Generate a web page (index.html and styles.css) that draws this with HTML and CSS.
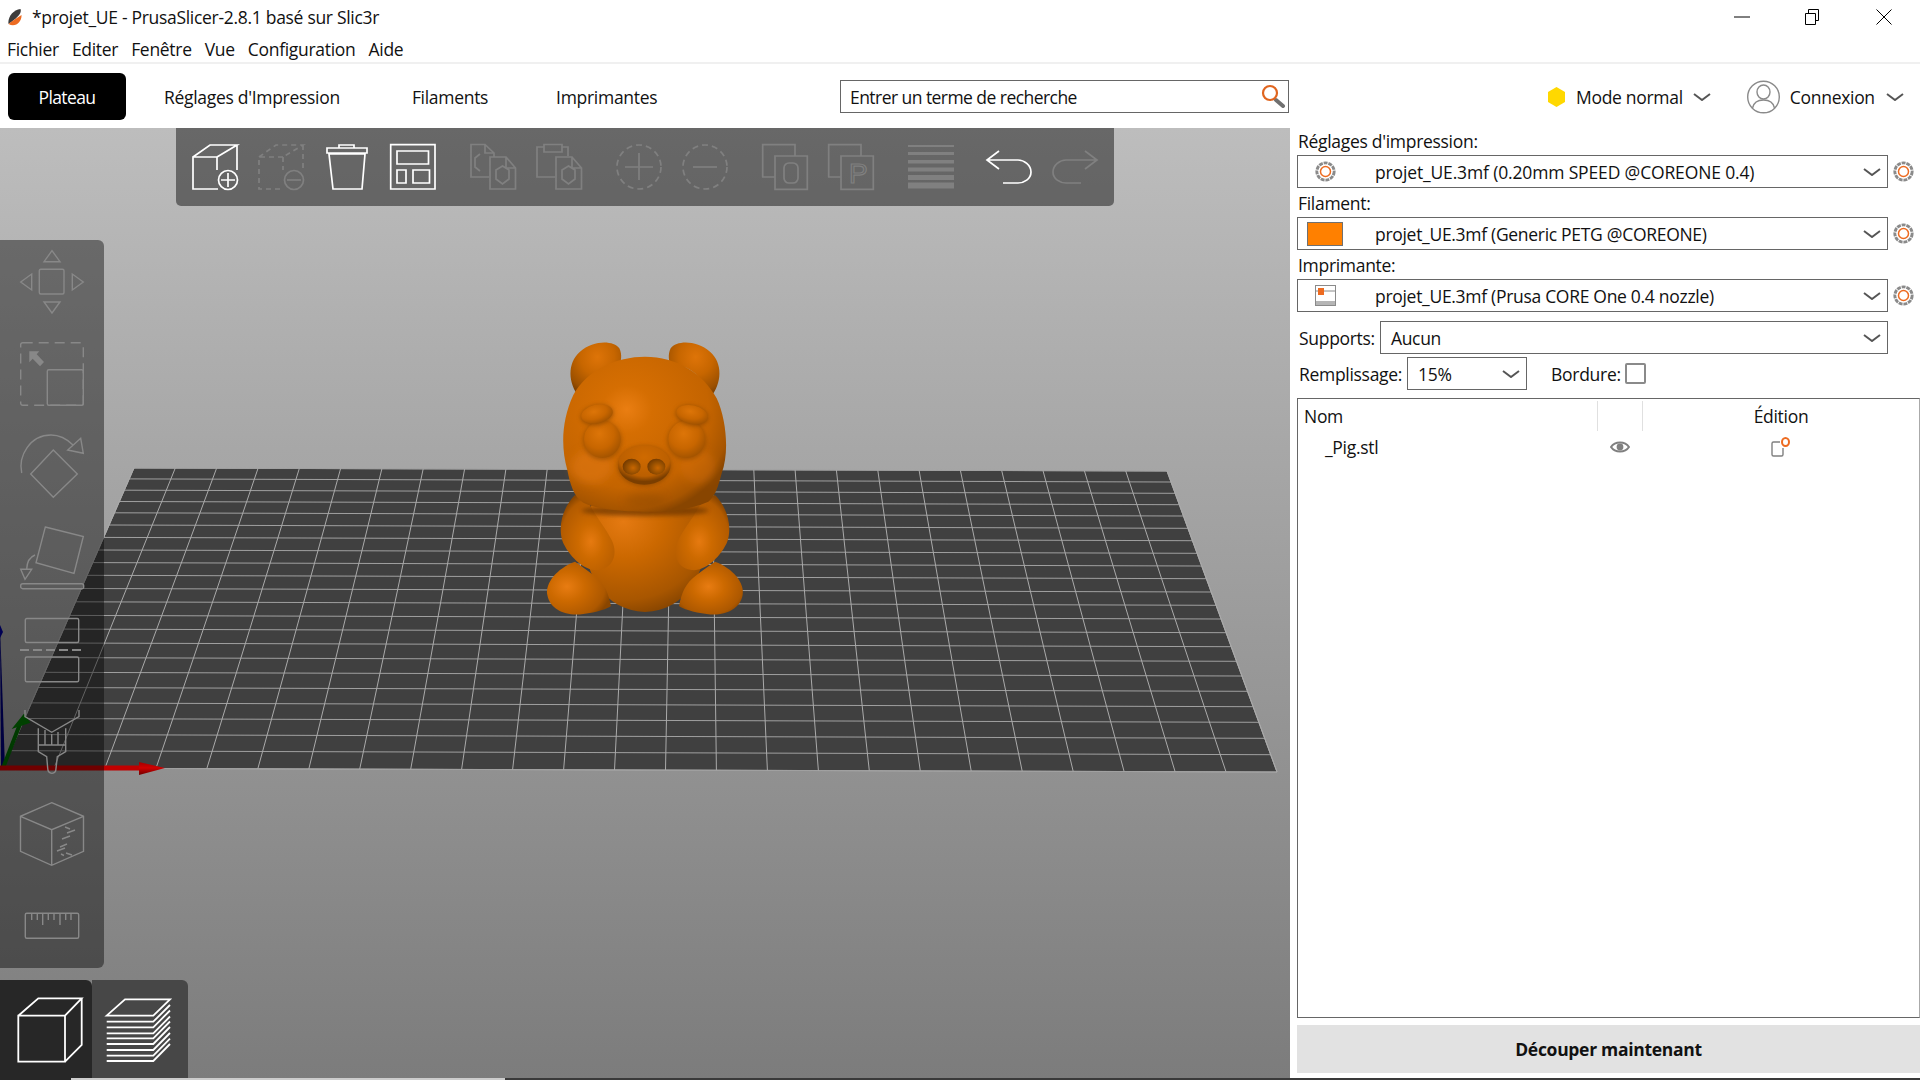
FILE: index.html
```html
<!DOCTYPE html>
<html lang="fr">
<head>
<meta charset="utf-8">
<title>PrusaSlicer</title>
<link rel="stylesheet" href="styles.css">
</head>
<body>
<svg class="defs" width="0" height="0" aria-hidden="true">
  <defs>
    <symbol id="gear" viewBox="0 0 21 21">
      <circle cx="10.5" cy="10.5" r="8.6" fill="none" stroke="#8a8a8a" stroke-width="3" stroke-dasharray="3.9 .9"/>
      <circle cx="10.5" cy="10.5" r="6.9" fill="#fff"/>
      <circle cx="10.5" cy="10.5" r="5" fill="#fff" stroke="#ed6b21" stroke-width="1.5"/>
    </symbol>
    <symbol id="chev" viewBox="0 0 18 8">
      <path d="M1 1 L9 7 L17 1" fill="none" stroke="#555" stroke-width="2"/>
    </symbol>
  </defs>
</svg>

<header class="titlebar">
  <div class="title-left">
    <svg class="logo" viewBox="0 0 14 17">
      <path d="M.5 15 C-.5 8 5 1 12.500 0 C14 4 10 8 .5 15 Z" fill="#3c3c3c"/>
      <path d="M.5 15 C4 12 9 9 13.500 6 C14 12 8 19 .5 15 Z" fill="#ed6b21"/>
    </svg>
    <span>*projet_UE - PrusaSlicer-2.8.1 basé sur Slic3r</span>
  </div>
  <div class="winctl">
    <svg class="win-min" width="16" height="2" viewBox="0 0 16 2"><path d="M0 1H16" stroke="#000" stroke-width="1"/></svg>
    <svg class="win-max" width="16" height="16" viewBox="0 0 16 16"><path d="M1.5 4.5H11.5V15.5H1.5Z M4.5 4.5V.5H14.5V11.5H11.5" fill="none" stroke="#000" stroke-width="1"/></svg>
    <svg class="win-close" width="16" height="16" viewBox="0 0 16 16"><path d="M.5 .5L15.5 15.5M15.5 .5L.5 15.5" stroke="#000" stroke-width="1"/></svg>
  </div>
</header>

<nav class="menubar">
  <span>Fichier</span><span>Editer</span><span>Fenêtre</span><span>Vue</span><span>Configuration</span><span>Aide</span>
</nav>

<div class="tabbar">
  <div class="tabs">
    <div class="tab active">Plateau</div>
    <div class="tab tab-print">Réglages d'Impression</div>
    <div class="tab">Filaments</div>
    <div class="tab">Imprimantes</div>
  </div>
  <div class="search">
    <span class="search-text">Entrer un terme de recherche</span>
    <svg class="search-icon" width="26" height="24" viewBox="0 0 26 24">
      <path d="M15 16 L22 22" stroke="#707070" stroke-width="4" stroke-linecap="round"/>
      <circle cx="9" cy="9" r="7" fill="none" stroke="#e0651f" stroke-width="2.2"/>
    </svg>
  </div>
  <div class="mode">
    <svg width="17" height="20" viewBox="0 0 17 20"><path d="M8.5 0L17 5V15L8.5 20L0 15V5Z" fill="#ffd800"/></svg>
    <span>Mode normal</span>
    <svg class="chev" width="18" height="8"><use href="#chev"/></svg>
  </div>
  <div class="account">
    <svg width="33" height="34" viewBox="0 0 33 34">
      <g fill="none" stroke="#8a8a8a" stroke-width="1.4">
        <circle cx="16.5" cy="17" r="15.8"/>
        <ellipse cx="16.5" cy="12" rx="6.5" ry="7"/>
        <path d="M5.5 28 C7 21 12 20 16.5 20 C21 20 26 21 27.5 28"/>
      </g>
    </svg>
    <span>Connexion</span>
    <svg class="chev" width="18" height="8"><use href="#chev"/></svg>
  </div>
</div>

<main class="main">
  <section class="viewport">
    <svg class="scene" width="1290" height="950" viewBox="0 128 1290 950">
      <defs>
        <radialGradient id="pg" cx=".39" cy=".34" r=".7">
          <stop offset="0" stop-color="#ea7e12"/>
          <stop offset=".22" stop-color="#d56e02"/>
          <stop offset=".72" stop-color="#c46400"/>
          <stop offset=".92" stop-color="#a75500"/>
          <stop offset="1" stop-color="#884500"/>
        </radialGradient>
        <radialGradient id="pb" cx=".32" cy=".18" r=".95">
          <stop offset="0" stop-color="#e57a12"/>
          <stop offset=".35" stop-color="#cb6800"/>
          <stop offset=".75" stop-color="#a85600"/>
          <stop offset="1" stop-color="#743b00"/>
        </radialGradient>
        <radialGradient id="pfl" cx=".31" cy=".47" r=".7">
          <stop offset="0" stop-color="#e87c12"/>
          <stop offset=".4" stop-color="#cc6900"/>
          <stop offset=".85" stop-color="#ad5800"/>
          <stop offset="1" stop-color="#8a4600"/>
        </radialGradient>
        <radialGradient id="pfr" cx=".46" cy=".47" r=".62">
          <stop offset="0" stop-color="#e87c12"/>
          <stop offset=".4" stop-color="#cc6900"/>
          <stop offset=".85" stop-color="#ad5800"/>
          <stop offset="1" stop-color="#8a4600"/>
        </radialGradient>
        <radialGradient id="pal" cx=".56" cy=".62" r=".66">
          <stop offset="0" stop-color="#e67a10"/>
          <stop offset=".35" stop-color="#cd6a00"/>
          <stop offset=".85" stop-color="#b35b00"/>
          <stop offset="1" stop-color="#8a4600"/>
        </radialGradient>
        <radialGradient id="par" cx=".44" cy=".62" r=".66">
          <stop offset="0" stop-color="#e67a10"/>
          <stop offset=".35" stop-color="#cd6a00"/>
          <stop offset=".85" stop-color="#b35b00"/>
          <stop offset="1" stop-color="#8a4600"/>
        </radialGradient>
        <radialGradient id="pear" cx=".53" cy=".27" r=".75">
          <stop offset="0" stop-color="#de7408"/>
          <stop offset=".45" stop-color="#c76600"/>
          <stop offset=".85" stop-color="#9c5000"/>
          <stop offset="1" stop-color="#7c3f00"/>
        </radialGradient>
        <radialGradient id="pe" cx=".42" cy=".35" r=".66">
          <stop offset="0" stop-color="#dd7508"/>
          <stop offset=".6" stop-color="#c86600"/>
          <stop offset="1" stop-color="#a45400"/>
        </radialGradient>
        <radialGradient id="pn" cx=".5" cy=".3" r=".62">
          <stop offset="0" stop-color="#cf6a00"/>
          <stop offset=".78" stop-color="#bb5f00"/>
          <stop offset="1" stop-color="#7a3e00"/>
        </radialGradient>
        <radialGradient id="pd" cx=".58" cy=".58" r=".6">
          <stop offset="0" stop-color="#c86600"/>
          <stop offset=".55" stop-color="#985000"/>
          <stop offset="1" stop-color="#733a00"/>
        </radialGradient>
        <linearGradient id="redg" x1="0" x2="0" y1="0" y2="1">
          <stop offset="0" stop-color="#a00000"/>
          <stop offset=".45" stop-color="#d00000"/>
          <stop offset="1" stop-color="#700000"/>
        </linearGradient>
        <filter id="blur6" x="-30%" y="-60%" width="160%" height="220%"><feGaussianBlur stdDeviation="6"/></filter>
        <filter id="blur12" x="-40%" y="-40%" width="180%" height="180%"><feGaussianBlur stdDeviation="12"/></filter>
      </defs>

      <path class="plate" d="M134 468L1167 471L1277 772L3 768Z"/>
      <path class="grid-h" d="M134 468L1167 471M129.2 478.9L1171 482M124.3 490.2L1175.1 493.3M119.4 501.5L1179.3 504.7M114.4 512.8L1183.4 516M109.1 525L1187.9 528.3M103.7 537.4L1192.5 540.7M98.2 550L1197.1 553.3M92.7 562.6L1201.7 566M87.1 575.3L1206.4 578.7M81.4 588.5L1211.2 592M75.6 601.8L1216.1 605.3M69.6 615.4L1221.1 619M63.6 629.1L1226.1 632.7M57.6 643L1231.2 646.7M51.2 657.6L1236.6 661.3M44.8 672.3L1242 676M38.2 687.5L1247.5 691.3M31.4 702.9L1253.1 706.7M24.6 718.5L1258.8 722.3M17.6 734.5L1264.7 738.3M10.5 750.7L1270.7 754.7M3 768L1277 772"/>
      <path class="grid-v" d="M134 468L3 768M175.3 468L54 768M216.6 468.2L104.9 768.3M258 468.4L155.9 768.5M299.3 468.5L206.8 768.6M340.6 468.6L257.8 768.8M381.9 468.7L308.8 769M423.2 468.8L359.7 769.1M464.6 469L410.7 769.3M505.9 469.1L461.6 769.4M547.2 469.2L512.6 769.6M588.5 469.3L563.6 769.8M629.8 469.4L614.5 770M671.2 469.6L665.5 770.1M712.5 469.7L716.4 770.2M753.8 469.8L767.4 770.4M795.1 469.9L818.4 770.6M836.4 470L869.3 770.7M877.8 470.2L920.3 770.9M919.1 470.3L971.2 771M960.4 470.4L1022.2 771.2M1001.7 470.5L1073.2 771.4M1043 470.6L1124.1 771.5M1084.4 470.8L1175.1 771.7M1125.7 470.9L1226 771.8M1167 471L1277 772"/>

      <path d="M1 768L0 632V625L5 768Z" fill="#00006e"/>
      <path d="M0 638L3 632L0 625Z" fill="#000090"/>
      <path d="M3 768L20 724" stroke="#006400" stroke-width="4" fill="none"/>
      <path d="M16 726 L24 716 L28 722 Z" fill="#007000" stroke="#007000" stroke-width="3"/>
      <path d="M0 765.5H140V770.500H0Z" fill="#c00000"/>
      <path d="M139 762L165 768L139 775Z" fill="url(#redg)"/>

      <g transform="translate(530 320) scale(.33333)">
        <path d="M147 230C115 190 110 130 150 95C190 60 250 60 268 85C278 105 272 125 270 133C230 135 190 150 170 195Z" fill="url(#pear)"/>
        <path d="M543 230C575 190 580 130 540 95C500 60 440 60 422 85C412 105 418 125 420 133C460 135 500 150 520 195Z" fill="url(#pear)"/>
        <path d="M190 545C130 650 170 870 345 876C520 870 560 650 505 545Z" fill="url(#pb)"/>
        <path d="M135 725C80 745 45 790 52 825C60 870 110 890 160 882C200 878 235 865 243 858C235 820 225 790 190 765C170 750 150 735 135 725Z" fill="url(#pfl)"/>
        <path d="M555 725C610 745 645 790 638 825C630 870 580 890 530 882C490 878 455 865 447 858C455 820 465 790 500 765C520 750 540 735 555 725Z" fill="url(#pfr)"/>
        <path d="M135 525C100 560 80 620 100 670C125 720 170 755 205 750C250 745 265 700 245 660C225 620 190 580 175 545Z" fill="url(#pal)"/>
        <path d="M555 525C590 560 610 620 590 670C565 720 520 755 485 750C440 745 425 700 445 660C465 620 500 580 515 545Z" fill="url(#par)"/>
        <ellipse cx="345" cy="572" rx="190" ry="16" fill="#6b3600" opacity=".7" filter="url(#blur6)"/>
        <path d="M345 110C440 110 520 160 560 235C590 300 598 400 575 460C565 500 555 530 535 545C480 570 400 578 340 575C280 575 200 568 160 548C130 530 120 490 112 450C92 380 95 300 130 225C170 150 260 110 345 110Z" fill="url(#pg)"/>
        <ellipse cx="185" cy="440" rx="62" ry="50" fill="#e47a12" opacity=".5" filter="url(#blur12)"/>
        <ellipse cx="505" cy="440" rx="52" ry="50" fill="#e07510" opacity=".35" filter="url(#blur12)"/>
        <ellipse cx="345" cy="540" rx="60" ry="22" fill="#8a4600" opacity=".35" filter="url(#blur12)"/>
        <ellipse cx="217" cy="362" rx="58" ry="58" fill="#8a4600" opacity=".6" filter="url(#blur6)"/>
        <ellipse cx="470" cy="362" rx="58" ry="58" fill="#8a4600" opacity=".6" filter="url(#blur6)"/>
        <ellipse cx="217" cy="358" rx="55" ry="56" fill="url(#pe)"/>
        <ellipse cx="470" cy="358" rx="55" ry="56" fill="url(#pe)"/>
        <ellipse cx="201" cy="285" rx="49" ry="29" transform="rotate(-12 201 285)" fill="#7d4000" opacity=".65" filter="url(#blur6)"/>
        <ellipse cx="486" cy="287" rx="49" ry="29" transform="rotate(12 486 287)" fill="#7d4000" opacity=".65" filter="url(#blur6)"/>
        <ellipse cx="201" cy="282" rx="48" ry="28" transform="rotate(-12 201 282)" fill="url(#pe)"/>
        <ellipse cx="486" cy="284" rx="48" ry="28" transform="rotate(12 486 284)" fill="url(#pe)"/>
        <ellipse cx="343" cy="438" rx="80" ry="60" fill="#7d4000" opacity=".6" filter="url(#blur6)"/>
        <ellipse cx="343" cy="435" rx="79" ry="59" fill="url(#pn)"/>
        <ellipse cx="305" cy="440" rx="27" ry="24" fill="url(#pd)"/>
        <ellipse cx="379" cy="440" rx="27" ry="24" fill="url(#pd)"/>
      </g>
    </svg>

    <div class="toolbar">
      <div class="tb-group">
        <svg class="ti on" viewBox="0 0 46 46"><path d="M25 13H1V45H26M1 13L18 1H45L25 13M25 13V26M45 1V26"/><circle cx="36" cy="36" r="9.5"/><path d="M36 29V43M29 36H43"/></svg>
        <svg class="ti off dash" viewBox="0 0 46 46"><path d="M25 13H1V45H26M1 13L18 1H45L25 13M25 13V26M45 1V26"/><circle class="solid" cx="36" cy="36" r="9.5"/><path class="solid" d="M29 36H43"/></svg>
        <svg class="ti on" viewBox="0 0 46 46"><path d="M15 4V1H30V4M3 4H43V9H3ZM5 10H41L38 45H9Z"/></svg>
        <svg class="ti on" viewBox="0 0 46 46"><path d="M.7 .7H45V45H.7ZM7 7H38.5V20H7ZM7 26H16V39H7ZM23 26H39.5V39H23Z"/></svg>
      </div>
      <div class="tb-group">
        <svg class="ti off" viewBox="0 0 46 46"><path d="M19 33H1V.5H15L24 9V13M15 .5V9H24M10 10L5 14V23L10 27"/><path d="M20 13H36L45.5 24V45H20ZM36 13V24H45.5M32.5 22L39 26V35L32.5 40L26 35V26Z"/></svg>
        <svg class="ti off" viewBox="0 0 46 46"><path d="M19 33H1V3H8M26 3H32V12M8 .5H26V8H8Z"/><path d="M20 13H36L45.5 24V45H20ZM36 13V24H45.5M32.5 22L39 26V35L32.5 40L26 35V26Z"/></svg>
      </div>
      <div class="tb-group">
        <svg class="ti off" viewBox="0 0 46 46"><circle class="dashed" cx="23" cy="23" r="22"/><path d="M23 9V36M9 23H37"/></svg>
        <svg class="ti off" viewBox="0 0 46 46"><circle class="dashed" cx="23" cy="23" r="22"/><path d="M11 23H35"/></svg>
      </div>
      <div class="tb-group">
        <svg class="ti off" viewBox="0 0 46 46"><path d="M13 33H.7V.7H33V12"/><path d="M13 12H45.3V45.3H13Z"/><rect x="22" y="19" width="14" height="20" rx="5"/></svg>
        <svg class="ti off" viewBox="0 0 46 46"><path d="M13 33H.7V.7H33V12"/><path d="M13 12H45.3V45.3H13Z"/><text class="ti-letter" x="21" y="39">P</text></svg>
      </div>
      <div class="tb-group">
        <svg class="ti off-fill" viewBox="0 0 46 46"><rect y="1" width="46" height="2"/><rect y="8" width="46" height="3"/><rect y="16" width="46" height="3.5"/><rect y="23.5" width="46" height="4"/><rect y="31" width="46" height="5"/><rect y="38.5" width="46" height="6"/></svg>
      </div>
      <div class="tb-group tb-undo">
        <svg class="ti on" viewBox="0 0 46 46"><path d="M13 7L1 16L13 25M1 16H32C38 16 45 21 45 28C45 35 38 39 32 39H17"/></svg>
        <svg class="ti off" viewBox="0 0 46 46"><path d="M33 7L45 16L33 25M45 16H14C8 16 1 21 1 28C1 35 8 39 14 39H29"/></svg>
      </div>
    </div>

    <div class="sidetools">
      <svg class="gi" viewBox="0 0 64 64"><path d="M32 .7L24 11.7H40ZM.7 32L11.7 24V40ZM63.3 32L52.3 24V40ZM32 63L24 52H40Z"/><rect x="19.3" y="19.3" width="24.7" height="24.7" rx="1.5"/></svg>
      <svg class="gi" viewBox="0 0 64 64"><rect class="gdash" x=".7" y=".7" width="62.6" height="62.6" rx="2"/><rect class="gback" x="27.3" y="27.7" width="36" height="35.6" rx="1.5"/><path class="gfill" d="M9.3 9.3H19.3L16.7 12.3L24 20L20 24.3L12.7 16.7L9.3 20.3Z"/></svg>
      <svg class="gi" viewBox="0 0 64 64"><path d="M1.7 39C-2 22 10 1 31 1C40 1 47 5 53 11"/><path d="M60.7 4.3L47.7 16L63.3 19.3ZM33.3 16L57.3 40L33.3 63.3L10.7 40Z"/></svg>
      <svg class="gi" viewBox="0 0 64 64"><path d="M25.3 1L63.3 10.5L54 47.3L16 36.7ZM15 29C10 31 7 36 6.7 43M.7 43.3H11.7L5 53.3Z"/><rect x=".7" y="57.7" width="63" height="5" rx="2"/></svg>
      <svg class="gi" viewBox="0 0 64 64"><rect x="5.3" y=".5" width="53.4" height="24" rx="1.5"/><path class="gdashline" d="M0 32H64"/><rect x="5.3" y="39" width="53.4" height="24.7" rx="1.5"/></svg>
      <svg class="gi" viewBox="0 0 64 64"><path d="M5 0V6.7L31.7 22.3L59 6.7V0M18.3 18.3V41.7L26.7 46.7L27.7 58.3C28 65 36 65 36 58.3L37.3 46.7L45.7 41.7V18.3M18.3 35H45.7M25 20V35M31.7 24V35M38 22V35"/></svg>
      <svg class="gi" viewBox="0 0 64 64"><path d="M31.7 .7L63.5 14.3V49.3L31.7 63.3L.5 49.3V14.3ZM.5 14.3L31.7 27.7L63.5 14.3M31.7 27.7V63.3M45 25L50 27M47 31L55 28M42 37L50 34M40 45L47 42M37 49L45 46M41 52L44 53.5M46 51L52 53"/></svg>
      <svg class="gi" viewBox="0 0 64 64"><rect x="5.3" y="19.3" width="53.4" height="25" rx="1.5"/><path d="M11.7 19.3V26M17.3 19.3V26M22.7 19.3V31M28.3 19.3V26M34 19.3V26M40 19.3V31M45.7 19.3V26M51 19.3V26"/></svg>
    </div>

    <div class="viewtabs">
      <div class="viewtab current">
        <svg class="vi" width="92" height="98" viewBox="0 0 92 98"><path d="M18.3 35.7H65V81.7H18.3ZM18.3 35.7L38.3 18.3H81.7L65 35.7M81.7 18.3V65L65 81.7"/></svg>
      </div>
      <div class="viewtab">
        <svg class="vi" width="96" height="98" viewBox="0 0 96 98"><path d="M14.7 35.7L33 19.3H78L61.3 35.7ZM14.7 41.7H61.3L78 25M14.7 47.3H61.3L78 30.5M14.7 53.3H61.3L78 36.5M14.7 58.3H61.3L78 41.5M14.7 64H61.3L78 47M14.7 70H61.3L78 53M14.7 75.7H61.3L78 58.7M14.7 81H61.3L78 64"/></svg>
      </div>
    </div>
  </section>

  <aside class="side">
    <div class="lbl">Réglages d'impression:</div>
    <div class="preset">
      <div class="combo">
        <svg class="cicon" width="21" height="21"><use href="#gear"/></svg>
        <span class="ctext wide">projet_UE.3mf (0.20mm SPEED @COREONE 0.4)</span>
        <svg class="chev" width="18" height="8"><use href="#chev"/></svg>
      </div>
      <svg class="gearbtn" width="21" height="21"><use href="#gear"/></svg>
    </div>
    <div class="lbl lbl2">Filament:</div>
    <div class="preset">
      <div class="combo">
        <div class="swatch"></div>
        <span class="ctext tight">projet_UE.3mf (Generic PETG @COREONE)</span>
        <svg class="chev" width="18" height="8"><use href="#chev"/></svg>
      </div>
      <svg class="gearbtn" width="21" height="21"><use href="#gear"/></svg>
    </div>
    <div class="lbl lbl2">Imprimante:</div>
    <div class="preset">
      <div class="combo">
        <svg class="cicon" width="21" height="21" viewBox="0 0 21 21">
          <rect x=".5" y=".5" width="20" height="20" fill="#fff" stroke="#8a8a8a"/>
          <rect x="1" y="16" width="19" height="4" fill="#b5b5b5"/>
          <path d="M1 6H20" stroke="#8a8a8a"/>
          <rect x="3" y="3" width="6" height="7" fill="#ed6b21"/>
        </svg>
        <span class="ctext">projet_UE.3mf (Prusa CORE One 0.4 nozzle)</span>
        <svg class="chev" width="18" height="8"><use href="#chev"/></svg>
      </div>
      <svg class="gearbtn" width="21" height="21"><use href="#gear"/></svg>
    </div>
    <div class="supports">
      <span class="slabel">Supports:</span>
      <div class="combo plain">
        <span>Aucun</span>
        <svg class="chev" width="18" height="8"><use href="#chev"/></svg>
      </div>
    </div>
    <div class="fillrow">
      <span class="flabel">Remplissage:</span>
      <div class="combo small">
        <span>15%</span>
        <svg class="chev" width="18" height="8"><use href="#chev"/></svg>
      </div>
      <span class="blabel">Bordure:</span>
      <span class="check"></span>
    </div>
    <div class="list">
      <div class="list-head">
        <span class="col-name">Nom</span>
        <span class="col-eye"></span>
        <span class="col-edit">Édition</span>
      </div>
      <div class="list-row">
        <span class="col-name item">_Pig.stl</span>
        <span class="col-eye">
          <svg width="20" height="14" viewBox="0 0 20 14"><path d="M1 7C5 1 15 1 19 7C15 13 5 13 1 7Z" fill="none" stroke="#808080" stroke-width="2"/><circle cx="10" cy="7" r="3.4" fill="#808080"/></svg>
        </span>
        <span class="col-edit">
          <svg width="20" height="20" viewBox="0 0 20 20"><path d="M9 5H2.500A1.500 1.500 0 0 0 1 6.500V17.500A1.500 1.500 0 0 0 2.500 19H10.500A1.500 1.500 0 0 0 12 17.500V11" fill="none" stroke="#808080" stroke-width="1.4"/><ellipse cx="14.500" cy="5" rx="3.500" ry="4" fill="#fff" stroke="#ed6b21" stroke-width="2"/></svg>
        </span>
      </div>
    </div>
    <button class="slice" type="button">Découper maintenant</button>
  </aside>
</main>

<div class="statusline">
  <div class="sl-a"></div>
  <div class="sl-b"></div>
  <div class="sl-c"></div>
</div>
</body>
</html>
```

FILE: styles.css
```css
* { box-sizing: border-box; }
html, body { margin: 0; padding: 0; }
body {
  width: 1920px;
  height: 1080px;
  overflow: hidden;
  background: #fff;
  color: #111;
  font-family: "Open Sans", "Liberation Sans", sans-serif;
  font-size: 17.500px;
  letter-spacing: -.3px;
  display: flex;
  flex-direction: column;
}
.defs { position: absolute; }

.titlebar { height: 34px; display: flex; justify-content: space-between; align-items: center; padding-left: 8px; }
.title-left { display: flex; align-items: center; gap: 10px; }
.logo { width: 14px; height: 17px; }
.winctl { display: flex; align-items: center; }
.win-min { margin-right: 54px; }
.win-max { margin-right: 56px; }
.win-close { margin-right: 28px; }

.menubar { height: 30px; display: flex; gap: 13px; padding: 2px 0 0 7px; align-items: center; border-bottom: 2px solid #f0f0f0; }

.tabbar { height: 64px; display: flex; align-items: center; padding-left: 8px; }
.tabs { display: flex; gap: 8px; width: 832px; padding-top: 0; }
.tab { height: 47px; display: flex; align-items: center; padding: 2px 30px 0; border-radius: 6px; }
.tab.active { background: #000; color: #fff; padding: 2px 30.500px 0; letter-spacing: -.6px; height: 47px; }
.tab-print { margin-right: 4px; }
.search { width: 449px; height: 33px; border: 1px solid #666; display: flex; align-items: center; justify-content: space-between; padding: 0 1px 0 9px; }
.search-text { letter-spacing: -.55px; padding-top: 1px; }
.mode { display: flex; align-items: center; margin-left: 259px; padding-top: 1px; }
.mode span { margin: 0 10px 0 11px; }
.account { display: flex; align-items: center; margin-left: 36px; padding-top: 1px; }
.account span { margin: 0 11px 0 10px; }
.chev { flex: none; }

.main { height: 950px; display: flex; }
.viewport { position: relative; width: 1290px; flex: none; background: linear-gradient(#bdbdbd, #7c7c7c); overflow: hidden; }
.scene { position: absolute; left: 0; top: 0; }
.plate { fill: #404040; stroke: #b0b0b0; stroke-width: 1; }
.grid-h { fill: none; stroke: #a0a0a0; stroke-width: 1; }
.grid-v { fill: none; stroke: #aaa; stroke-width: 1; }

.toolbar { position: absolute; left: 176px; top: 0; height: 78px; width: 938px; padding: 16px 16px 0; display: flex; gap: 34px; background: rgba(0,0,0,.45); border-radius: 0 0 5px 5px; }
.tb-group { display: flex; gap: 20px; }
.tb-undo { margin-left: -2px; }
.ti { width: 46px; height: 46px; flex: none; overflow: visible; fill: none; stroke-width: 1.7; }
.ti.on { stroke: #fff; }
.ti.off { stroke: #808080; }
.ti.off-fill { fill: #808080; }
.dash { stroke-dasharray: 5 4; }
.dash .solid { stroke-dasharray: none; }
.dashed { stroke-dasharray: 6 4; }
.ti-letter { font-family: "Liberation Sans", sans-serif; font-size: 28px; letter-spacing: 0; fill: none; stroke-width: 1.2; }

.sidetools { position: absolute; left: 0; top: 112px; width: 104px; height: 728px; padding: 10px 20px; display: flex; flex-direction: column; gap: 28px; background: rgba(0,0,0,.42); border-radius: 0 6px 6px 0; }
.gi { width: 64px; height: 64px; flex: none; overflow: visible; fill: none; stroke: #888; stroke-width: 1.4; }
.gdash { stroke-dasharray: 10 6; }
.gback { fill: none; }
.gfill { fill: #888; stroke: none; }
.gdashline { stroke-dasharray: 9 4; stroke-width: 2; }

.viewtabs { position: absolute; left: 0; bottom: 0; height: 98px; display: flex; }
.viewtab { width: 96px; background: #474747; border-radius: 0 6px 0 0; }
.viewtab.current { width: 92px; background: #272727; }
.vi { display: block; fill: none; stroke: #fff; stroke-width: 1.8; }

.side { width: 630px; padding-left: 7px; display: flex; flex-direction: column; }
.lbl { height: 27px; display: flex; align-items: center; padding-left: 1px; padding-bottom: 0; line-height: 1; }
.lbl2 { height: 29px; padding-top: 3px; }
.preset { display: flex; align-items: center; gap: 5px; height: 33px; }
.combo { width: 591px; height: 33px; flex: none; border: 1px solid #666; display: flex; align-items: center; position: relative; padding-right: 6px; }
.cicon { margin-left: 17px; flex: none; }
.swatch { width: 36px; height: 24px; margin-left: 9px; flex: none; background: #ff8000; border: 1px solid #707070; }
.ctext { margin-left: 39px; flex: 1; }
.ctext.wide { letter-spacing: -.15px; }
.ctext.tight { margin-left: 32px; }
.gearbtn { flex: none; }
.supports { display: flex; align-items: center; height: 33px; margin-top: 9px; gap: 5px; padding-left: 2px; }
.supports .combo.plain { width: 508px; padding-left: 10px; justify-content: space-between; }
.fillrow { display: flex; align-items: center; height: 33px; margin-top: 3px; padding-left: 2px; }
.combo.small { width: 120px; margin-left: 5px; padding-left: 10px; padding-right: 6px; justify-content: space-between; }
.blabel { margin-left: 24px; }
.check { width: 21px; height: 21px; margin-left: 4px; border: 2px solid #8a8a8a; border-radius: 2px; }

.list { height: 620px; margin-top: 8px; border: 1px solid #666; border-right-color: #aaa; display: flex; flex-direction: column; }
.list-head { display: flex; height: 33px; align-items: center; padding-top: 0; }
.list-head .col-eye { height: 30px; }
.list-row { display: flex; height: 30px; align-items: center; padding-top: 0; }
.col-name { width: 299px; padding-left: 6px; flex: none; }
.col-name.item { padding-left: 27px; }
.col-eye { width: 46px; flex: none; height: 30px; display: flex; align-items: center; justify-content: center; }
.list-head .col-eye { border-left: 1px solid #e0e0e0; border-right: 1px solid #e0e0e0; }
.col-edit { flex: 1; display: flex; justify-content: center; }
.slice { height: 48px; margin-top: 7px; border: 0; padding: 0; background: #e2e2e2; color: #111; font: 700 17.500px "Open Sans", "Liberation Sans", sans-serif; letter-spacing: -.3px; }

.statusline { height: 2px; display: flex; }
.sl-a { width: 71px; background: #272727; }
.sl-b { width: 434px; background: #ccc; }
.sl-c { flex: 1; background: #3a3a3a; }
```
